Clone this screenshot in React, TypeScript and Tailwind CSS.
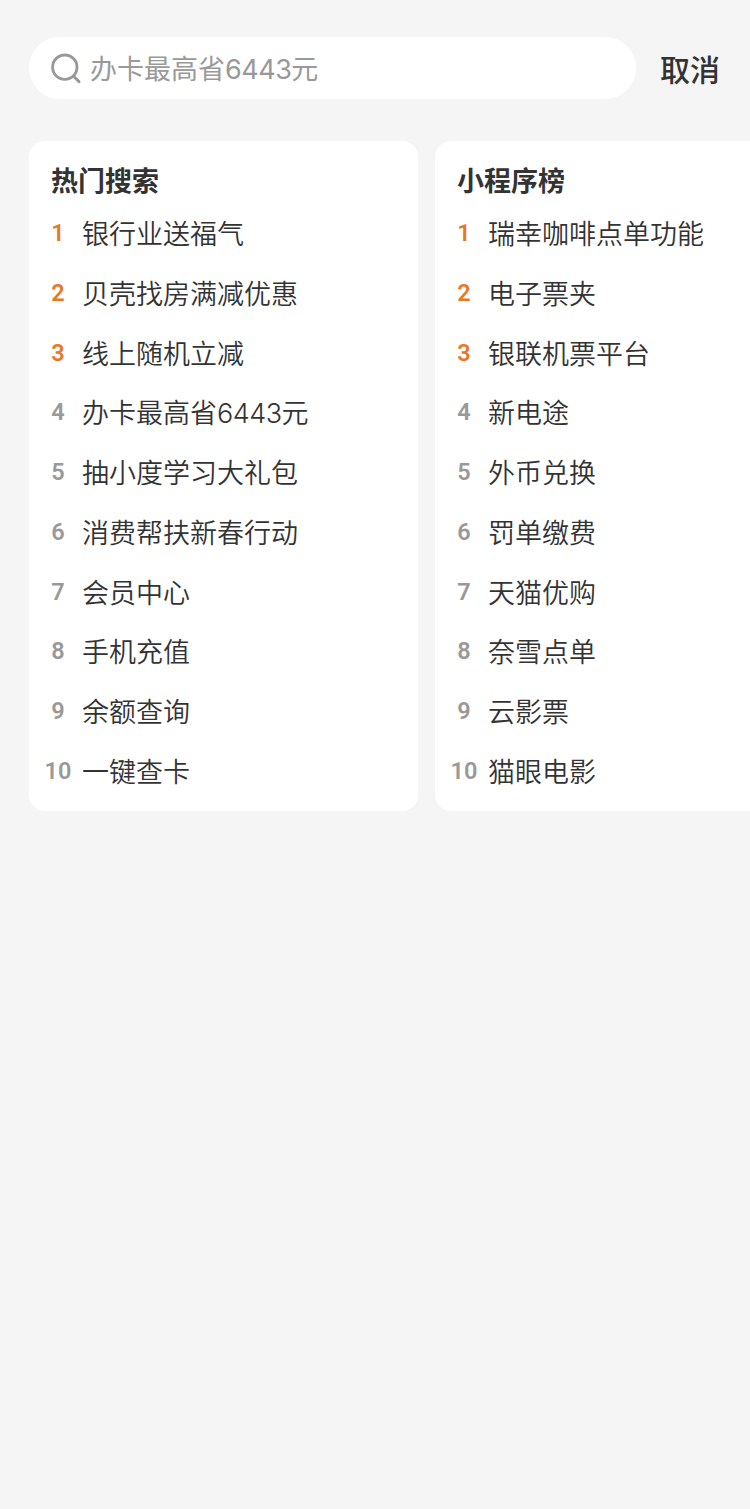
const hotSearches = [
  "银行业送福气", "贝壳找房满减优惠", "线上随机立减", "办卡最高省6443元", "抽小度学习大礼包",
  "消费帮扶新春行动", "会员中心", "手机充值", "余额查询", "一键查卡",
];

const miniPrograms = [
  "瑞幸咖啡点单功能", "电子票夹", "银联机票平台", "新电途", "外币兑换",
  "罚单缴费", "天猫优购", "奈雪点单", "云影票", "猫眼电影",
];

// Tightens the digits inside a Chinese label
const Label = ({ text }: { text: string }) => (
  <>
    {text.split(/(\d+)/).map((part, index) =>
      index % 2 ? <span key={index} className="tracking-[-0.5px]">{part}</span> : part
    )}
  </>
);

const RankCard = ({ title, items }: { title: string; items: string[] }) => (
  <section className="h-[670px] w-[389px] shrink-0 rounded-2xl bg-white pt-[21px]">
    <h2 className="pl-[22px] text-[27px] leading-10 font-bold">{title}</h2>
    <ol className="pt-[3px]">
      {items.map((item, index) => (
        <li key={item} className="flex h-[59.75px] items-start">
          <span
            className={`ml-[9px] w-10 shrink-0 text-center font-['Roboto'] text-[23.5px] leading-[56px] font-semibold ${
              index < 3 ? "text-[#e77828]" : "text-[#999999]"
            }`}
          >
            {index + 1}
          </span>
          <span className="ml-1 text-[27px] leading-[59px] font-[350] whitespace-nowrap">
            <Label text={item} />
          </span>
        </li>
      ))}
    </ol>
  </section>
);

const App = () => {
  return (
    <main className="h-[1509px] overflow-hidden bg-[#f5f5f5] pt-[37px] pl-[29px] font-['Inter','Noto_Sans_CJK_SC',sans-serif] text-[#333333]">
      <header className="flex items-center">
        <div className="flex h-[62px] w-[607px] items-center rounded-full bg-white pl-[21px] text-[#999999]">
          <svg width="32" height="32" viewBox="0 0 32 32" fill="none" stroke="currentColor" strokeWidth="2.9" strokeLinecap="round">
            <circle cx="14.8" cy="15.2" r="12.2" />
            <path d="m23.6 24.2 5.4 5.4" />
          </svg>
          <span className="ml-2 pt-1 text-[27px] leading-10">
            <Label text="办卡最高省6443元" />
          </span>
        </div>
        <button className="ml-6 pt-[3px] text-[30px] leading-10 font-medium">取消</button>
      </header>

      <div className="mt-[42px] flex gap-[17px]">
        <RankCard title="热门搜索" items={hotSearches} />
        <RankCard title="小程序榜" items={miniPrograms} />
      </div>
    </main>
  );
};

export default App;
